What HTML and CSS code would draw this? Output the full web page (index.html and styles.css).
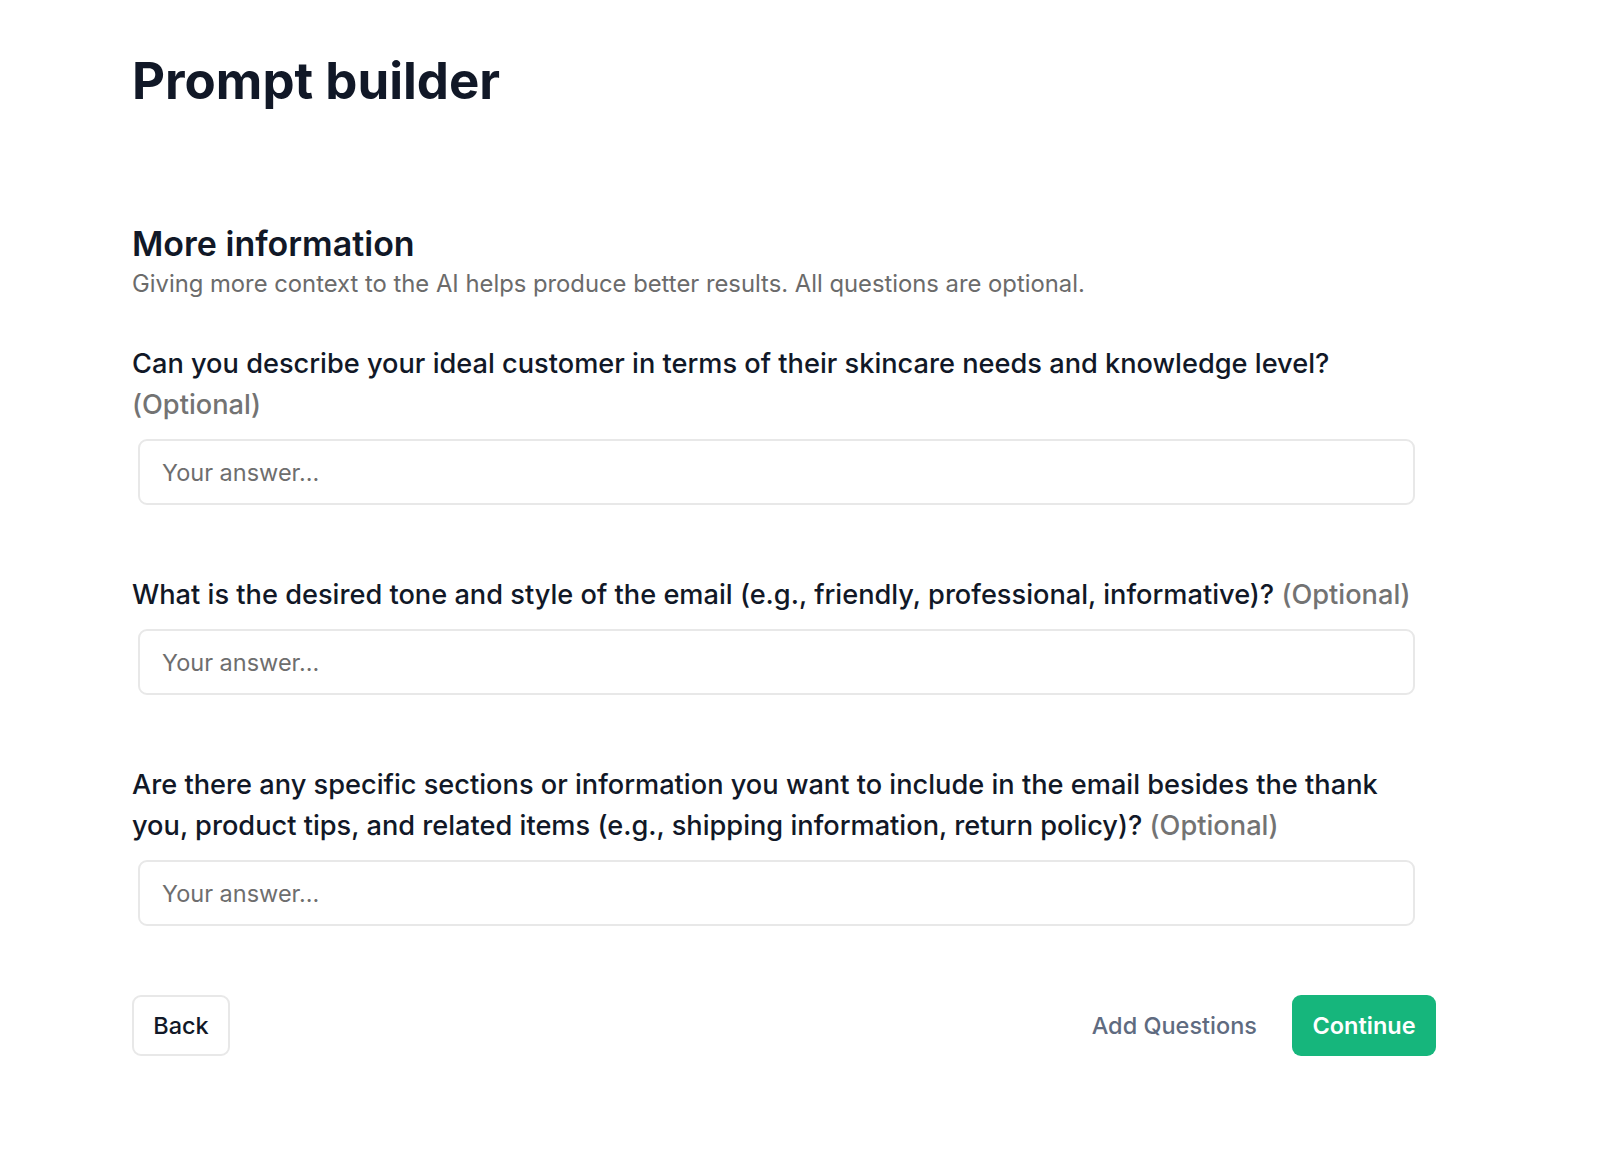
FILE: index.html
```html
<!DOCTYPE html>
<html lang="en">
<head>
<meta charset="utf-8">
<title>Prompt builder</title>
<link rel="stylesheet" href="styles.css">
</head>
<body>
<main class="page">
  <h1 class="title">Prompt builder</h1>

  <section class="section">
    <h2 class="section-title">More information</h2>
    <p class="section-sub">Giving more context to the AI helps produce better results. All questions are optional.</p>

    <div class="questions">
      <div class="question">
        <label class="q-label"><span class="q-text">Can you describe your ideal customer in terms of their skincare needs and knowledge level?</span> <span class="optional">(Optional)</span></label>
        <input class="answer" type="text" placeholder="Your answer...">
      </div>
      <div class="question">
        <label class="q-label"><span class="q-text">What is the desired tone and style of the email (e.g., friendly, professional, informative)?</span> <span class="optional">(Optional)</span></label>
        <input class="answer" type="text" placeholder="Your answer...">
      </div>
      <div class="question">
        <label class="q-label"><span class="q-text">Are there any specific sections or information you want to include in the email besides the thank you, product tips, and related items (e.g., shipping information, return policy)?</span> <span class="optional">(Optional)</span></label>
        <input class="answer" type="text" placeholder="Your answer...">
      </div>
    </div>

    <div class="actions">
      <button class="btn btn-back" type="button">Back</button>
      <div class="actions-right">
        <button class="btn-link" type="button">Add Questions</button>
        <button class="btn btn-primary" type="button">Continue</button>
      </div>
    </div>
  </section>
</main>
</body>
</html>
```

FILE: styles.css
```css
* {
  box-sizing: border-box;
}

html, body {
  margin: 0;
  padding: 0;
  background: #ffffff;
}

body {
  font-family: Inter, "Noto Sans", "Liberation Sans", sans-serif;
  color: #111827;
}

.page {
  padding: 50px 0 0 132px;
  width: 1435px;
}

.title {
  margin: 0;
  font-size: 51px;
  line-height: 62px;
  font-weight: 750;
  color: #111827;
}

.section {
  margin-top: 111px;
}

.section-title {
  margin: 0;
  font-size: 34px;
  line-height: 42px;
  font-weight: 600;
  color: #111827;
}

.section-sub {
  margin: 4px 0 0;
  font-size: 23.8px;
  line-height: 30px;
  font-weight: 400;
  color: #6b6b6b;
}

.questions {
  margin-top: 44px;
  display: flex;
  flex-direction: column;
  gap: 69px;
}

.question {
  display: flex;
  flex-direction: column;
}

.q-label {
  display: block;
  width: 1290px;
  font-size: 27.2px;
  line-height: 41px;
  font-weight: 500;
  color: #111827;
}

.optional {
  color: #737373;
}

.answer {
  margin: 14px 0 0 6px;
  width: 1277px;
  height: 66px;
  padding: 0 22px;
  border: 2px solid #e8e8e8;
  border-radius: 9px;
  font-family: inherit;
  font-size: 23.5px;
  color: #111827;
  background: #ffffff;
  outline: none;
}

.answer::placeholder {
  color: #6e6e6e;
}

.actions {
  margin-top: 69px;
  display: flex;
  justify-content: space-between;
  align-items: center;
  width: 1304px;
}

.actions-right {
  display: flex;
  align-items: center;
  gap: 35px;
}

.btn {
  height: 61px;
  border-radius: 9px;
  font-family: inherit;
  font-size: 23.5px;
  font-weight: 500;
  cursor: pointer;
}

.btn-back {
  width: 98px;
  background: #ffffff;
  border: 2px solid #e8e8e8;
  color: #111827;
}

.btn-link {
  background: none;
  border: none;
  padding: 0;
  font-family: inherit;
  font-size: 23.5px;
  font-weight: 500;
  color: #5f6b80;
  cursor: pointer;
}

.btn-primary {
  width: 144px;
  background: #16b67c;
  border: none;
  color: #ffffff;
  font-weight: 600;
}
```
